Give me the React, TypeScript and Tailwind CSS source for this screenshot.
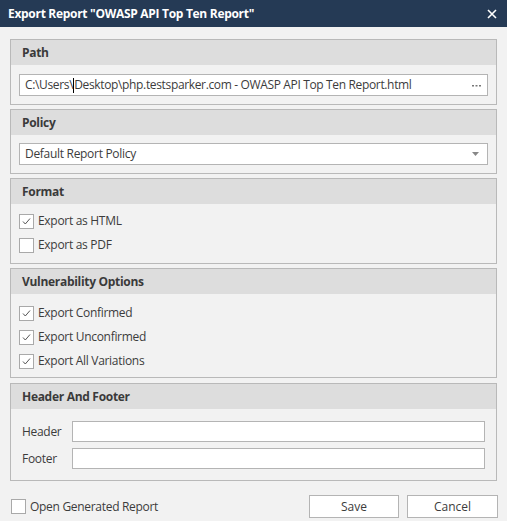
import React from "react";

const font = { fontFamily: '"Open Sans", "Noto Sans", "Liberation Sans", sans-serif' };

function Panel({ title, children }: { title: string; children: React.ReactNode }) {
  return (
    <div className="border border-[#b9b9b9] bg-[#f2f2f2]">
      <div className="h-[25px] bg-[#dddddd] pl-[11px] flex items-center text-[12px] font-bold text-[#3a3a3a] tracking-[-0.3px]">
        {title}
      </div>
      {children}
    </div>
  );
}

function Check({ checked, label }: { checked: boolean; label: string }) {
  return (
    <div className="flex items-center h-[24px]">
      <div className="w-[15px] h-[15px] border border-[#a9a9a9] bg-white flex items-center justify-center">
        {checked && (
          <svg width="11" height="11" viewBox="0 0 11 11">
            <path d="M2 5.5 L4.3 8 L9 2.5" fill="none" stroke="#555" strokeWidth="1" />
          </svg>
        )}
      </div>
      <span className="ml-[4px] text-[12px] text-[#3c3c3c] tracking-[-0.3px]">{label}</span>
    </div>
  );
}

export default function App() {
  return (
    <div className="w-[507px] h-[521px] bg-[#f2f2f2] flex flex-col" style={font}>
      <div className="h-[27px] bg-[#253a55] flex items-center justify-between pl-[8px] pr-[10px]">
        <span className="text-white text-[12px] font-bold tracking-[-0.3px]">Export Report "OWASP API Top Ten Report"</span>
        <svg width="10" height="10" viewBox="0 0 10 10">
          <path d="M1 1 L9 9 M9 1 L1 9" stroke="white" strokeWidth="1.6" />
        </svg>
      </div>
      <div className="px-[10px] pt-[12px] flex flex-col gap-[4px]">
        <Panel title="Path">
          <div className="px-[8px] pt-[9px] pb-[8px]">
            <div className="h-[22px] border border-[#b4b4b4] bg-white flex items-center pl-[5px] pr-[6px] text-[12px] text-[#3c3c3c] tracking-[-0.35px]">
              <span className="whitespace-nowrap">C:\Users\</span>
              <span className="inline-block w-[1px] h-[15px] bg-black" />
              <span className="whitespace-nowrap flex-1">Desktop\php.testsparker.com - OWASP API Top Ten Report.html</span>
              <svg width="9" height="3" viewBox="0 0 9 3">
                <rect x="0" y="1" width="2" height="1.5" fill="#777" />
                <rect x="3.5" y="1" width="2" height="1.5" fill="#777" />
                <rect x="7" y="1" width="2" height="1.5" fill="#777" />
              </svg>
            </div>
          </div>
        </Panel>
        <Panel title="Policy">
          <div className="px-[8px] pt-[8px] pb-[8px]">
            <div className="h-[22px] border border-[#b4b4b4] bg-white flex items-center justify-between pl-[5px] pr-[8px] text-[12px] text-[#3c3c3c] tracking-[-0.3px]">
              <span>Default Report Policy</span>
              <svg width="7" height="4" viewBox="0 0 7 4">
                <path d="M0 0 L7 0 L3.5 4 Z" fill="#888" />
              </svg>
            </div>
          </div>
        </Panel>
        <Panel title="Format">
          <div className="px-[8px] pt-[5px] pb-[6px]">
            <Check checked label="Export as HTML" />
            <Check checked={false} label="Export as PDF" />
          </div>
        </Panel>
        <Panel title="Vulnerability Options">
          <div className="px-[8px] pt-[7px] pb-[4px]">
            <Check checked label="Export Confirmed" />
            <Check checked label="Export Unconfirmed" />
            <Check checked label="Export All Variations" />
          </div>
        </Panel>
        <div className="mt-[1px]">
          <Panel title="Header And Footer">
            <div className="pl-[11px] pr-[11px] pt-[12px] pb-[11px] flex flex-col gap-[6px]">
              <div className="flex items-center">
                <span className="w-[50px] text-[12px] text-[#3c3c3c] tracking-[-0.3px]">Header</span>
                <div className="flex-1 h-[21px] border border-[#b4b4b4] bg-white" />
              </div>
              <div className="flex items-center">
                <span className="w-[50px] text-[12px] text-[#3c3c3c] tracking-[-0.3px]">Footer</span>
                <div className="flex-1 h-[21px] border border-[#b4b4b4] bg-white" />
              </div>
            </div>
          </Panel>
        </div>
      </div>
      <div className="flex items-center justify-between pl-[11px] pr-[9px] mt-[14px]">
        <div className="flex items-center">
          <div className="w-[15px] h-[15px] border border-[#a9a9a9] bg-white" />
          <span className="ml-[4px] text-[12px] text-[#3c3c3c] tracking-[-0.3px]">Open Generated Report</span>
        </div>
        <div className="flex gap-[8px]">
          <div className="w-[90px] h-[23px] border border-[#b4b4b4] bg-white flex items-center justify-center text-[12px] text-[#3c3c3c]">Save</div>
          <div className="w-[91px] h-[23px] border border-[#b4b4b4] bg-white flex items-center justify-center text-[12px] text-[#3c3c3c]">Cancel</div>
        </div>
      </div>
    </div>
  );
}
